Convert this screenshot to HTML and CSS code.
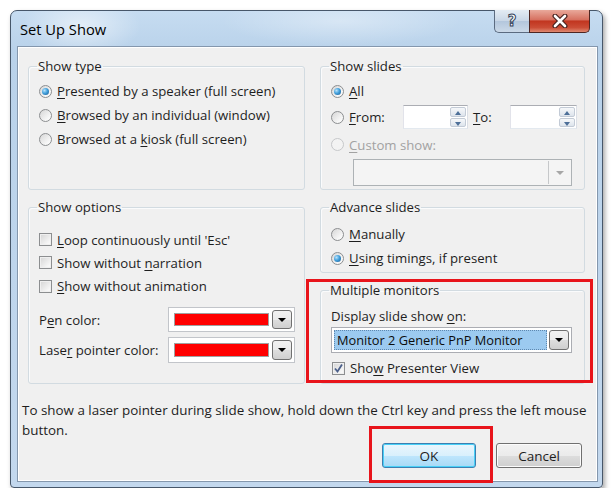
FILE: index.html
```html
<!DOCTYPE html>
<html lang="en">
<head>
  <meta charset="UTF-8">
  <title>Set Up Show</title>
  <link rel="stylesheet" href="styles.css">
</head>
<body>
  <div id="dialog">
    <div id="title-bar">
      <span id="title">Set Up Show</span>
      <div id="caption-buttons">
        <div class="caption-btn help">?</div>
        <div class="caption-btn close">
          <svg width="20" height="14" viewBox="0 0 20 14">
            <path d="M5 2 L15 12 M15 2 L5 12" stroke="#4a2420" stroke-width="5" stroke-linecap="round"/>
            <path d="M5 2 L15 12 M15 2 L5 12" stroke="#fff" stroke-width="2.6" stroke-linecap="round"/>
          </svg>
        </div>
      </div>
    </div>

    <div id="client">
      <div id="groups">
        <fieldset class="group show-type">
          <legend>Show type</legend>
          <div class="option"><span class="radio checked"></span><span><u>P</u>resented by a speaker (full screen)</span></div>
          <div class="option"><span class="radio"></span><span><u>B</u>rowsed by an individual (window)</span></div>
          <div class="option"><span class="radio"></span><span>Browsed at a <u>k</u>iosk (full screen)</span></div>
        </fieldset>

        <fieldset class="group show-slides">
          <legend>Show slides</legend>
          <div class="option"><span class="radio checked"></span><span><u>A</u>ll</span></div>
          <div class="option range-row">
            <span class="radio"></span>
            <span class="range-label"><u>F</u>rom:</span>
            <span class="spin from"><span class="spin-btns"><span class="spin-up"></span><span class="spin-down"></span></span></span>
            <span class="to-label"><u>T</u>o:</span>
            <span class="spin to"><span class="spin-btns"><span class="spin-up"></span><span class="spin-down"></span></span></span>
          </div>
          <div class="option custom-row disabled"><span class="radio"></span><span><u>C</u>ustom show:</span></div>
          <div class="combo custom-combo disabled"><span class="combo-field"></span><span class="combo-btn"><span class="arrow"></span></span></div>
        </fieldset>

        <fieldset class="group show-options">
          <legend>Show options</legend>
          <div class="check-row"><span class="check"></span><span><u>L</u>oop continuously until 'Esc'</span></div>
          <div class="check-row"><span class="check"></span><span>Show without <u>n</u>arration</span></div>
          <div class="check-row last"><span class="check"></span><span><u>S</u>how without animation</span></div>
          <div class="color-row pen">
            <span class="color-label">P<u>e</u>n color:</span>
            <div class="combo color-combo"><span class="swatch"></span><span class="combo-btn"><span class="arrow"></span></span></div>
          </div>
          <div class="color-row laser">
            <span class="color-label">Lase<u>r</u> pointer color:</span>
            <div class="combo color-combo"><span class="swatch"></span><span class="combo-btn"><span class="arrow"></span></span></div>
          </div>
        </fieldset>

        <div class="right-column">
          <fieldset class="group advance">
            <legend>Advance slides</legend>
            <div class="option"><span class="radio"></span><span><u>M</u>anually</span></div>
            <div class="option"><span class="radio checked"></span><span><u>U</u>sing timings, if present</span></div>
          </fieldset>

          <fieldset class="group monitors">
            <legend>Multiple monitors</legend>
            <div class="field-label">Display slide show <u>o</u>n:</div>
            <div class="combo monitor-combo">
              <span class="combo-field"><span class="selected-text">Monitor 2 Generic PnP Monitor</span></span>
              <span class="combo-btn"><span class="arrow"></span></span>
            </div>
            <div class="check-row presenter"><span class="check checked">
              <svg width="11" height="11" viewBox="0 0 11 11"><path d="M2 5.5 L4.5 8.5 L9 1.5" fill="none" stroke="#4b5f8a" stroke-width="1.8"/></svg>
            </span><span>Sho<u>w</u> Presenter View</span></div>
          </fieldset>
        </div>
      </div>

      <p id="hint">To show a laser pointer during slide show, hold down the Ctrl key and press the left mouse button.</p>

      <div id="buttons">
        <button class="push default">OK</button>
        <button class="push">Cancel</button>
      </div>

      <!-- red highlight marks -->
      <div class="callout monitors-mark"></div>
      <div class="callout ok-mark"></div>
    </div>
  </div>
</body>
</html>
```

FILE: styles.css
```css
html, body {
  margin: 0;
  padding: 0;
  background: #fff;
  font-family: "Open Sans", "Noto Sans", sans-serif;
  font-size: 13.2px;
  color: #1e1e1e;
}

#dialog {
  margin: 10px 0 0 10px;
  width: 593px;
  box-sizing: border-box;
  border: 1px solid #47576a;
  border-radius: 7px 7px 4px 4px;
  padding: 0 4px 5px 6px;
  background:
    radial-gradient(ellipse 60px 30px at 70px 15px, rgba(255,255,255,0.55), rgba(255,255,255,0)),
    radial-gradient(ellipse 120px 25px at 330px 10px, rgba(255,255,255,0.35), rgba(255,255,255,0)),
    linear-gradient(to bottom, #c6dcf1, #b9d2ea 40px, #c3d8ee);
  box-shadow: 2px 3px 5px rgba(0,0,0,0.35);
}

#title-bar {
  height: 35px;
  display: flex;
  align-items: flex-start;
  justify-content: space-between;
}

#title {
  margin-top: 8px;
  margin-left: 3px;
  font-size: 14.7px;
  color: #000;
}

#caption-buttons {
  display: flex;
  margin-right: 8px;
  margin-top: -1px;
}

.caption-btn {
  height: 23px;
  box-sizing: border-box;
  border: 1px solid #5b6b80;
  border-top: none;
  display: flex;
  align-items: center;
  justify-content: center;
}

.caption-btn.help {
  width: 35px;
  border-radius: 0 0 0 5px;
  border-right: none;
  background: linear-gradient(to bottom, #e4ecf4, #c8d6e6 50%, #b3c6dc 51%, #cbd9e8);
  color: #fff;
  font-family: "DejaVu Sans", sans-serif;
  font-weight: bold;
  font-size: 15px;
  -webkit-text-stroke: 1px #33435a;
}

.caption-btn.close {
  width: 61px;
  border-radius: 0 0 5px 0;
  border-color: #4e2622;
  background: linear-gradient(to bottom, #e9a99b, #d6705f 45%, #c1351f 50%, #cb4d36 80%, #e08a72);
}

#client {
  position: relative;
  background: #f0f0f0;
  border: 1px solid #8497ad;
  box-shadow: inset 0 0 0 1px #fff;
  padding: 11px 12px 13px 10px;
}

#groups {
  display: grid;
  grid-template-columns: 277px 265px;
  column-gap: 15px;
  row-gap: 9px;
}

.right-column {
  display: flex;
  flex-direction: column;
  gap: 9px;
}

fieldset.group {
  margin: 0;
  min-width: 0;
  padding: 5px 8px 0 10px;
  border: 1px solid #d2dbe1;
  border-radius: 3px;
  box-shadow: inset 1px 1px 0 #fafbfc;
}

legend {
  padding: 0 1px;
  margin-left: -2px;
  line-height: 16px;
  color: #1e1e1e;
}

u {
  text-decoration-thickness: 1px;
  text-underline-offset: 2px;
}

.option {
  display: flex;
  align-items: center;
  gap: 5px;
  height: 24px;
}

.option.disabled {
  color: #a2a2a2;
}

.radio {
  flex: none;
  width: 13px;
  height: 13px;
  box-sizing: border-box;
  border-radius: 50%;
  border: 1px solid #8c8e90;
  background: linear-gradient(135deg, #d6d6d6, #f8f8f8 75%);
  position: relative;
}

.radio.checked::after {
  content: "";
  position: absolute;
  left: 2px;
  top: 2px;
  width: 7px;
  height: 7px;
  border-radius: 50%;
  background: radial-gradient(circle at 35% 35%, #b9e3fb 0, #42a0dc 45%, #18568d 100%);
}

.option.disabled .radio {
  border-color: #c6c8ca;
  background: #f3f3f3;
}

/* show slides */
fieldset.group.show-slides {
  padding-bottom: 3px;
}

.range-row {
  height: 28px;
}

.range-label {
  width: 49px;
  flex: none;
}

.spin {
  flex: none;
  height: 24px;
  box-sizing: border-box;
  border: 1px solid #abadb3;
  border-color: #abadb3 #dbdfe6 #e3e9ef #e2e3ea;
  background: #fff;
  display: flex;
  justify-content: flex-end;
  padding: 1px;
}

.spin.from {
  width: 65px;
}

.spin.to {
  width: 67px;
}

.to-label {
  width: 32px;
  flex: none;
}

.spin-btns {
  width: 16px;
  display: flex;
  flex-direction: column;
  gap: 1px;
}

.spin-up, .spin-down {
  flex: 1;
  border: 1px solid #c3cbd6;
  border-radius: 2px;
  background: linear-gradient(to bottom, #f6f8fa, #dde4ec);
  position: relative;
}

.spin-up::after, .spin-down::after {
  content: "";
  position: absolute;
  left: 4px;
  top: 3px;
  border-left: 3.5px solid transparent;
  border-right: 3.5px solid transparent;
}

.spin-up::after {
  border-bottom: 4px solid #4d6f98;
}

.spin-down::after {
  border-top: 4px solid #4d6f98;
}

.custom-row {
  height: 27px;
}

.combo {
  display: flex;
  box-sizing: border-box;
  border: 1px solid #abadb3;
  background: #fff;
}

.combo-btn {
  flex: none;
  width: 20px;
  box-sizing: border-box;
  border: 1px solid #707070;
  border-radius: 3px;
  background: linear-gradient(to bottom, #f2f2f2, #ebebeb 50%, #dddddd 51%, #cfcfcf);
  display: flex;
  align-items: center;
  justify-content: center;
}

.arrow {
  border-left: 4px solid transparent;
  border-right: 4px solid transparent;
  border-top: 4px solid #000;
}

.custom-combo {
  margin: 1px 0 0 22px;
  width: 219px;
  height: 27px;
  border-color: #adb2b5;
  background: #f4f4f4;
  padding: 1px;
}

.custom-combo .combo-field {
  flex: 1;
}

.custom-combo .combo-btn {
  width: 22px;
  border: none;
  border-left: 1px solid #c6c8ca;
  border-radius: 0;
  background: #f4f4f4;
}

.custom-combo .arrow {
  border-top-color: #a6a6a6;
}

/* show options */
fieldset.group.show-options {
  padding-top: 13px;
  padding-bottom: 20px;
}

.check-row {
  display: flex;
  align-items: center;
  gap: 5px;
  height: 23px;
}

.check-row.last {
  height: 24px;
}

.check {
  flex: none;
  width: 13px;
  height: 13px;
  box-sizing: border-box;
  border: 1px solid #8c8e90;
  background: linear-gradient(135deg, #d4d4d4, #f7f7f7 80%);
  box-shadow: inset 0 0 0 1px #efefef;
  display: flex;
  align-items: center;
  justify-content: center;
}

.check svg {
  display: block;
}

.color-row {
  display: flex;
  align-items: center;
  justify-content: space-between;
  padding-right: 1px;
}

.color-row.pen {
  margin-top: 9px;
  height: 25px;
}

.color-row.laser {
  margin-top: 5px;
  height: 26px;
}

.color-combo {
  width: 127px;
  height: 100%;
  padding: 2px 2px 2px 5px;
  border-color: #c2c5ca;
  align-items: stretch;
  gap: 3px;
}

.swatch {
  flex: 1;
  margin: 3px 0;
  background: #f00;
  border: 1px solid #a0a0a0;
}

/* right column */
fieldset.group.advance {
  padding-top: 7px;
  padding-bottom: 2px;
}

fieldset.group.monitors {
  flex: 1;
  padding-top: 8px;
}

.field-label {
  height: 20px;
  line-height: 20px;
}

.monitor-combo {
  margin-top: 1px;
  width: 241px;
  height: 26px;
  padding: 2px;
  gap: 2px;
}

.monitor-combo .combo-field {
  flex: 1;
  background: #9ccaf0;
  border: 1px dotted #5e88b0;
  display: flex;
  align-items: center;
  padding-left: 2px;
}

.selected-text {
  font-size: 12.8px;
  color: #0c0c0c;
}

.check-row.presenter {
  margin-top: 3px;
  height: 24px;
  padding-left: 1px;
}

/* bottom */
#hint {
  margin: 16px -12px 0 -6px;
  font-size: 13.4px;
  line-height: 20px;
}

#buttons {
  display: flex;
  justify-content: flex-end;
  gap: 20px;
  margin: 3px 3px 0 0;
}

.push {
  font-family: inherit;
  font-size: 13.5px;
  color: #1e1e1e;
  height: 25px;
  box-sizing: border-box;
  border: 1px solid #707070;
  border-radius: 3px;
  background: linear-gradient(to bottom, #f2f2f2, #ebebeb 50%, #dddddd 51%, #cfcfcf);
  box-shadow: inset 0 0 0 1px #fcfcfc;
  padding: 0;
}

.push.default {
  width: 94px;
  border-color: #3c7fb1;
  box-shadow: inset 0 0 0 1px #48d0f7;
  background: linear-gradient(to bottom, #eaf6fd, #d9f0fc 50%, #bee6fd 51%, #a7d9f5);
}

.push:not(.default) {
  width: 86px;
}

.callout {
  position: absolute;
  box-sizing: border-box;
  border: 3px solid #e8141b;
}

.monitors-mark {
  left: 288px;
  top: 232px;
  width: 287px;
  height: 104px;
}

.ok-mark {
  left: 351px;
  top: 379px;
  width: 124px;
  height: 57px;
}
```
